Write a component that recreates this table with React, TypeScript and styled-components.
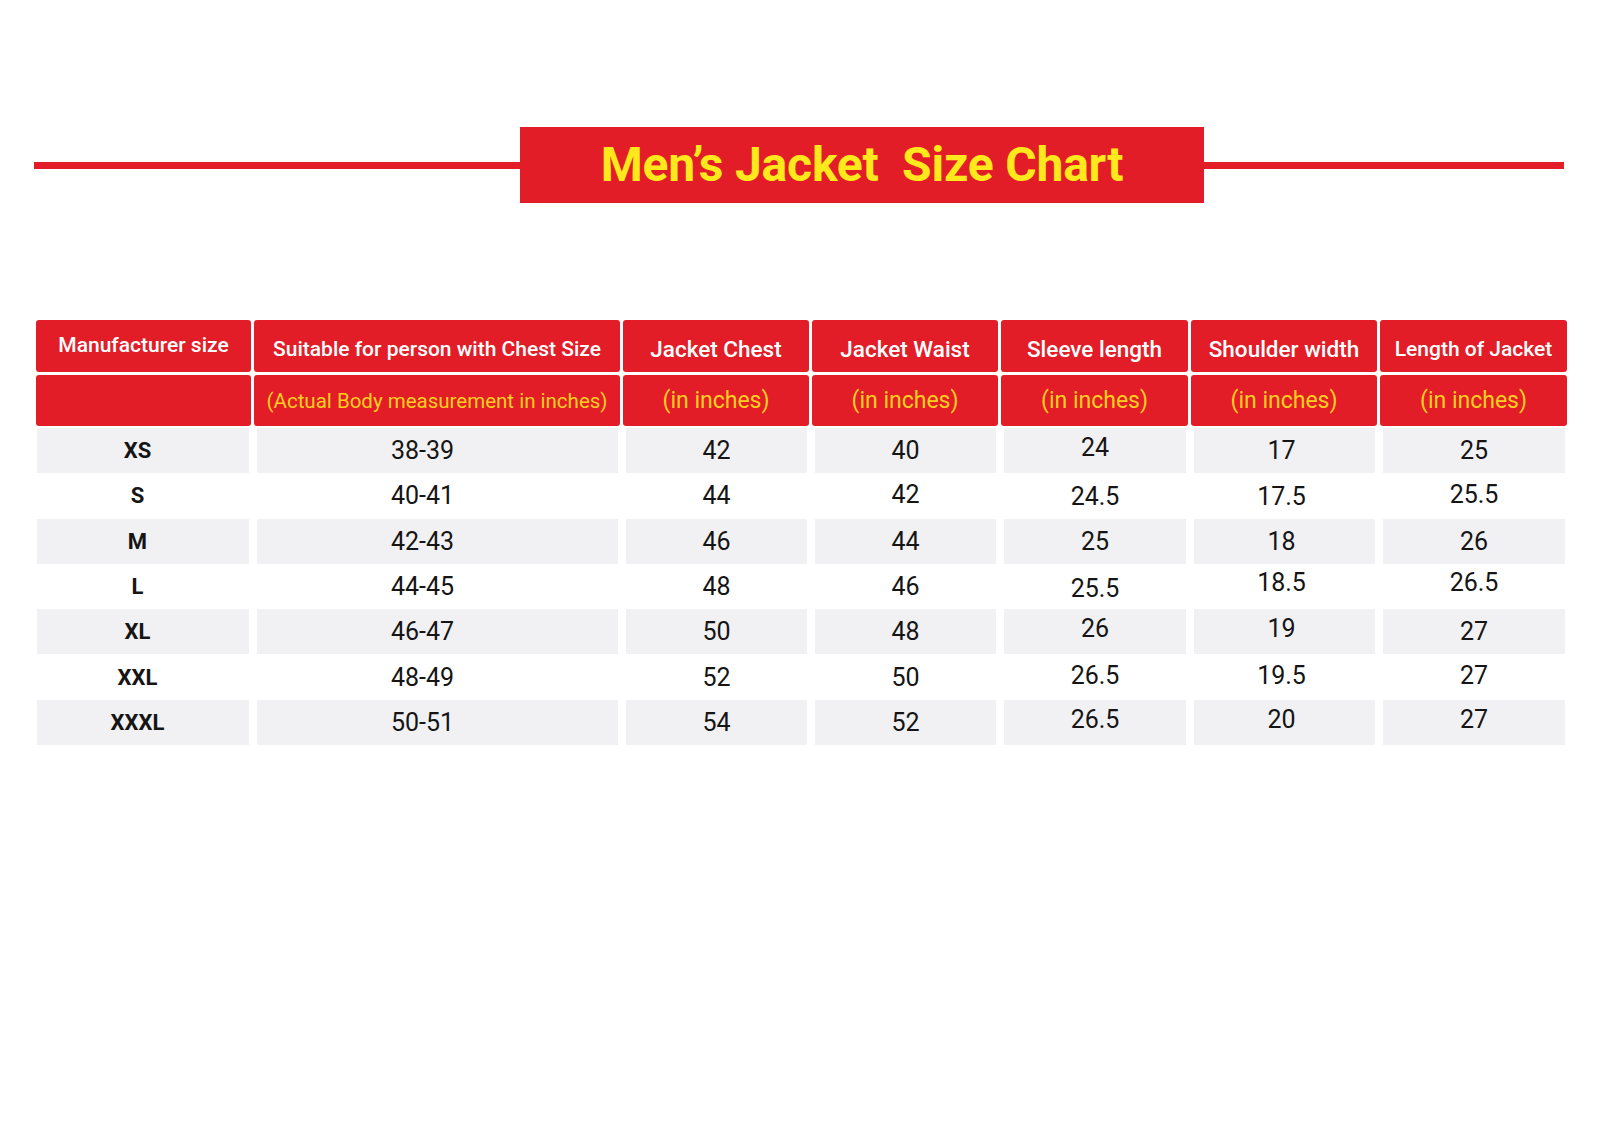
import React from 'react';
import styled, { createGlobalStyle } from 'styled-components';

const GlobalStyle = createGlobalStyle`
   html, body {
      margin: 0;
      padding: 0;
      background: #ffffff;
   }
   body {
      font-family: Roboto, 'Liberation Sans', Arial, sans-serif;
   }
`;

const RED = '#e31d27';
const YELLOW = '#ffe81c';
const SUB_YELLOW = '#ffcf1f';
const GREY = '#f1f1f3';

const COLUMNS = '215px 366px 186px 186px 187px 186px 187px';

const Page = styled.div`
   width: 1600px;
   height: 1131px;
   padding: 127px 0 0 34px;
   box-sizing: border-box;
`;

const TitleBar = styled.div`
   display: flex;
   align-items: center;
`;

const Rule = styled.div<{ $width: number }>`
   width: ${({ $width }) => $width}px;
   height: 7px;
   background: ${RED};
`;

const TitleBox = styled.h1`
   margin: 0;
   width: 684px;
   height: 76px;
   display: flex;
   align-items: center;
   justify-content: center;
   padding-bottom: 2px;
   box-sizing: border-box;
   background: ${RED};
   color: ${YELLOW};
   font-size: 48px;
   font-weight: 700;
   letter-spacing: -0.2px;
   white-space: pre;
`;

const Table = styled.div`
   margin: 117px 0 0 2px;
   display: flex;
   flex-direction: column;
`;

const HeadRow = styled.div`
   display: grid;
   grid-template-columns: ${COLUMNS};
   column-gap: 3px;
   margin-bottom: 3px;
`;

const HeadCell = styled.div<{ $sub?: boolean; $lift?: boolean; $size: number }>`
   height: ${({ $sub }) => ($sub ? '51px' : '52px')};
   display: flex;
   align-items: center;
   justify-content: center;
   padding-top: ${({ $sub, $lift }) => ($sub || $lift ? '0' : '6px')};
   padding-bottom: ${({ $lift }) => ($lift ? '2px' : '0')};
   box-sizing: border-box;
   border-radius: 3px;
   background: ${RED};
   color: ${({ $sub }) => ($sub ? SUB_YELLOW : '#ffffff')};
   font-size: ${({ $size }) => $size}px;
   font-weight: ${({ $sub }) => ($sub ? 400 : 500)};
   white-space: nowrap;
`;

const BodyRow = styled.div<{ $shaded: boolean }>`
   display: grid;
   grid-template-columns: ${COLUMNS};
   column-gap: 3px;
   height: 45.3px;
   --cell-bg: ${({ $shaded }) => ($shaded ? GREY : 'transparent')};
   &:nth-child(3) {
      margin-top: -1px;
   }
`;

const BodyCell = styled.div<{ $size?: boolean; $shift: number; $dy: number }>`
   margin: 0 2px 0 ${({ $size }) => ($size ? '1px' : '3px')};
   display: flex;
   align-items: center;
   justify-content: center;
   padding-right: ${({ $shift }) => $shift}px;
   padding-bottom: ${({ $dy }) => ($dy > 0 ? $dy * 2 : 0)}px;
   padding-top: ${({ $dy }) => ($dy < 0 ? -$dy * 2 : 0)}px;
   background: var(--cell-bg);
   color: #151515;
   font-size: ${({ $size }) => ($size ? '22px' : '25px')};
   font-weight: ${({ $size }) => ($size ? 700 : 400)};
`;

const head: [string, number][] = [
   ['Manufacturer size', 21],
   ['Suitable for person with Chest Size', 21],
   ['Jacket Chest', 22.5],
   ['Jacket Waist', 22.5],
   ['Sleeve length', 22.5],
   ['Shoulder width', 22.5],
   ['Length of Jacket', 21],
];

const sub: [string, number][] = [
   ['', 21],
   ['(Actual Body measurement in inches)', 20.5],
   ['(in inches)', 23],
   ['(in inches)', 23],
   ['(in inches)', 23],
   ['(in inches)', 23],
   ['(in inches)', 23],
];

const rows = [
   ['XS', '38-39', '42', '40', '24', '17', '25'],
   ['S', '40-41', '44', '42', '24.5', '17.5', '25.5'],
   ['M', '42-43', '46', '44', '25', '18', '26'],
   ['L', '44-45', '48', '46', '25.5', '18.5', '26.5'],
   ['XL', '46-47', '50', '48', '26', '19', '27'],
   ['XXL', '48-49', '52', '50', '26.5', '19.5', '27'],
   ['XXXL', '50-51', '54', '52', '26.5', '20', '27'],
];

// the printed chart has a few values sitting a touch higher or lower
const lifts = [
   [0, 0, 0, 0, 3, 0, 0],
   [0, 0, 0, 1, -1, -1, 1],
   [0, 0, 0, 0, 0, 0, 0],
   [0, 0, 0, 0, -2, 4, 4],
   [0, 0, 0, 0, 3, 3, 0],
   [0, 0, 0, 0, 2, 2, 2],
   [0, 0, 0, 0, 3, 3, 3],
];

const shifts = [11, 30, 0, 0, 0, 6, 0];

const App: React.FC = () => {
   return (
      <Page>
         <GlobalStyle />
         <TitleBar>
            <Rule $width={486} />
            <TitleBox>{'Men’s Jacket  Size Chart'}</TitleBox>
            <Rule $width={360} />
         </TitleBar>

         <Table>
            <HeadRow>
               {head.map(([label, size], i) => (
                  <HeadCell key={label} $lift={i === 0} $size={size}>
                     {label}
                  </HeadCell>
               ))}
            </HeadRow>
            <HeadRow>
               {sub.map(([label, size], i) => (
                  <HeadCell key={i} $sub $size={size}>
                     {label}
                  </HeadCell>
               ))}
            </HeadRow>
            {rows.map((row, r) => (
               <BodyRow key={row[0]} $shaded={r % 2 === 0}>
                  {row.map((value, c) => (
                     <BodyCell key={c} $size={c === 0} $shift={shifts[c]} $dy={lifts[r][c]}>
                        {value}
                     </BodyCell>
                  ))}
               </BodyRow>
            ))}
         </Table>
      </Page>
   );
};

export default App;
